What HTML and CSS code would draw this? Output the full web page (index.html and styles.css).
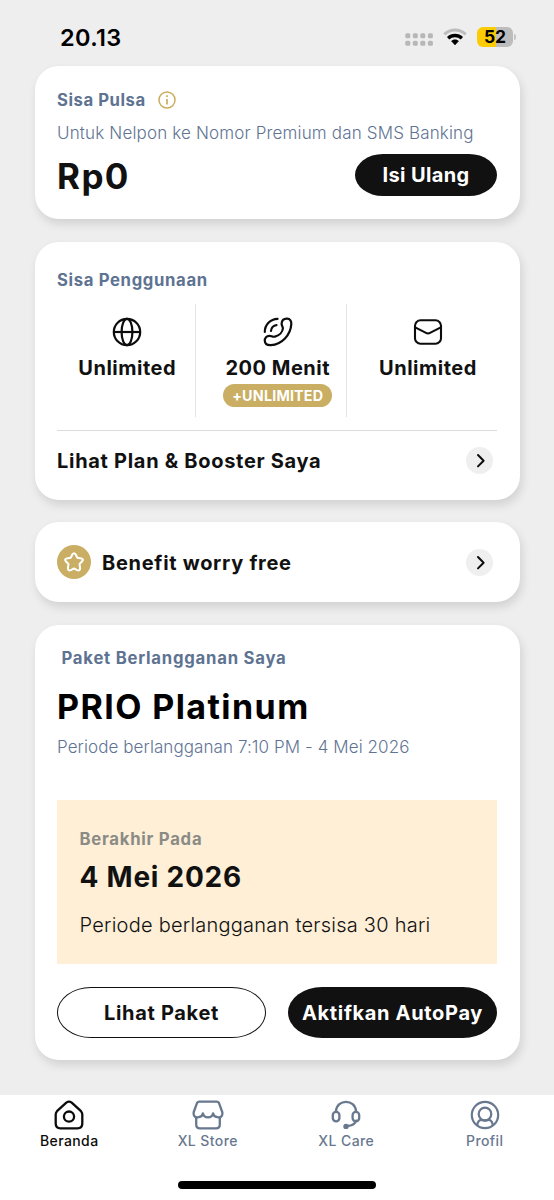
FILE: index.html
```html
<!DOCTYPE html>
<html lang="id">
<head>
<meta charset="utf-8">
<title>Beranda</title>
<link rel="stylesheet" href="styles.css">
</head>
<body>
<header class="status">
  <span class="status-time">20.13</span>
  <div class="status-icons">
    <svg class="dots" width="29" height="14" viewBox="0 0 29 14" fill="#b7b7b7">
      <rect x="0.3" y="0.2" width="5" height="5" rx="1.5"/><rect x="7.8" y="0.2" width="5" height="5" rx="1.5"/><rect x="15.3" y="0.2" width="5" height="5" rx="1.5"/><rect x="22.9" y="0.2" width="5" height="5" rx="1.5"/>
      <rect x="0.3" y="7.7" width="5" height="5" rx="1.5"/><rect x="7.8" y="7.7" width="5" height="5" rx="1.5"/><rect x="15.3" y="7.7" width="5" height="5" rx="1.5"/><rect x="22.9" y="7.7" width="5" height="5" rx="1.5"/>
    </svg>
    <svg class="wifi" width="24" height="18" viewBox="0 0 24 18" fill="none" stroke-width="3">
      <path d="M1.3 6.3C7.3.5 16.7.5 22.7 6.3" stroke="#bdbdbd"/>
      <path d="M5.1 10.2C9 6.6 15 6.6 18.9 10.2" stroke="#000" stroke-width="3.3"/>
      <path d="M8.5 13.1C10.4 11.4 13.6 11.4 15.5 13.1L12 16.9Z" fill="#000" stroke="#000" stroke-width=".6" stroke-linejoin="round"/>
    </svg>
    <div class="battery"><span class="battery-level">52</span><i class="battery-cap"></i></div>
  </div>
</header>

<main class="content">
  <section class="card balance">
    <div class="balance-head">
      <h2 class="label">Sisa Pulsa</h2>
      <svg width="18" height="18" viewBox="0 0 18 18" fill="none" stroke="#cbad5e" stroke-width="1.5"><circle cx="9" cy="9" r="8"/><path d="M9 8V13.6M9 4.3V6.1" stroke-width="1.7"/></svg>
    </div>
    <p class="note balance-note">Untuk Nelpon ke Nomor Premium dan SMS Banking</p>
    <div class="balance-row">
      <span class="amount">Rp0</span>
      <button class="btn btn-dark btn-small">Isi Ulang</button>
    </div>
  </section>

  <section class="card usage">
    <h2 class="label">Sisa Penggunaan</h2>
    <div class="quota">
      <div class="quota-item">
        <svg width="30" height="30" viewBox="0 0 30 30" fill="none" stroke="#0c0c0c" stroke-width="2.2"><circle cx="15" cy="15" r="13.2"/><ellipse cx="15" cy="15" rx="5.4" ry="13.2"/><path d="M1.7 15H28.3"/></svg>
        <span class="quota-value">Unlimited</span>
      </div>
      <div class="quota-item">
        <svg width="30" height="30" viewBox="0 0 30 30" fill="none" stroke="#0c0c0c" stroke-width="2.2" stroke-linecap="round" stroke-linejoin="round"><path d="M18.6 6.8C18.8 3.3 21.2 1.6 24.1 1.7C27.2 1.9 28.5 4.2 28.3 7.1C27.7 17.8 18.8 27.6 7.9 28.1C4.6 28.3 2 26.9 1.8 23.9C1.6 20.8 3.6 18.7 6.5 18.8C8.4 18.9 9.7 20.2 12 19.6C16.2 18.5 19.6 15.1 19.9 11.5C20 9.9 18.5 8.6 18.6 6.8Z"/><path d="M1.8 14.9C1.8 7.6 7.3 2 14.6 1.8M8 14C8.1 10.9 10.4 8.4 13.5 8.1"/></svg>
        <span class="quota-value">200 Menit</span>
        <span class="badge">+UNLIMITED</span>
      </div>
      <div class="quota-item">
        <svg width="30" height="30" viewBox="0 0 30 30" fill="none" stroke="#0c0c0c" stroke-width="2.1" stroke-linejoin="round"><rect x="2" y="3.3" width="26" height="23.4" rx="5.5"/><path d="M2.2 10.4L13 15.9Q15 17.1 17 15.9L27.8 10.4"/></svg>
        <span class="quota-value">Unlimited</span>
      </div>
    </div>
    <a class="link-row">
      <span class="row-title">Lihat Plan &amp; Booster Saya</span>
      <span class="chevron"><svg width="27" height="27" viewBox="0 0 27 27" fill="none" stroke="#0c0c0c" stroke-width="2" stroke-linecap="round" stroke-linejoin="round"><path d="M12 8L17.6 13.7L12 19.4"/></svg></span>
    </a>
  </section>

  <a class="card benefit">
    <span class="star"><svg width="34" height="34" viewBox="0 0 34 34" fill="none" stroke="#fff" stroke-width="2" stroke-linejoin="round"><path d="M15.4 9.3Q17 7 18.6 9.3L20.3 12.8L24.3 13.4Q27 14.2 25.2 16.3L22.5 19L23.1 23.2Q23 26.4 20.2 25.2L17 23.5L13.8 25.2Q11 26.4 10.9 23.2L11.5 19L8.8 16.3Q7 14.2 9.7 13.4L13.7 12.8Z"/></svg></span>
    <span class="row-title">Benefit worry free</span>
    <span class="chevron"><svg width="27" height="27" viewBox="0 0 27 27" fill="none" stroke="#0c0c0c" stroke-width="2" stroke-linecap="round" stroke-linejoin="round"><path d="M12 8L17.6 13.7L12 19.4"/></svg></span>
  </a>

  <section class="card plan">
    <h2 class="label plan-label">Paket Berlangganan Saya</h2>
    <h1 class="plan-name">PRIO Platinum</h1>
    <p class="note plan-period">Periode berlangganan 7:10 PM - 4 Mei 2026</p>
    <div class="expiry">
      <span class="expiry-label">Berakhir Pada</span>
      <strong class="expiry-date">4 Mei 2026</strong>
      <span class="expiry-left">Periode berlangganan tersisa 30 hari</span>
    </div>
    <div class="actions">
      <button class="btn btn-outline">Lihat Paket</button>
      <button class="btn btn-dark">Aktifkan AutoPay</button>
    </div>
  </section>
</main>

<footer class="bottom">
  <nav class="tabs">
    <a class="tab tab-active">
      <svg width="30" height="30" viewBox="0 0 30 30" fill="none" stroke="currentColor" stroke-width="2.3" stroke-linejoin="round"><path d="M12.3 2.6Q15 .8 17.7 2.6L27 11.2Q28.3 12.6 28.3 14.5V23.5Q28.3 28.3 23.5 28.3H6.5Q1.7 28.3 1.7 23.5V14.5Q1.7 12.6 3 11.2Z"/><circle cx="15" cy="16.6" r="5.1"/></svg>
      <span class="tab-name">Beranda</span>
    </a>
    <a class="tab">
      <svg width="32" height="30" viewBox="0 0 32 30" fill="none" stroke="currentColor" stroke-width="2.3" stroke-linejoin="round"><path d="M7.6 1.7H24.4Q26.6 1.7 27.3 3.8L30.4 12.5Q30.8 17.5 26.3 17.3Q21.8 17.2 21.1 13.3Q20.2 17.4 16 17.4Q11.8 17.4 10.9 13.3Q10.2 17.2 5.7 17.3Q1.2 17.5 1.6 12.5L4.7 3.8Q5.4 1.7 7.6 1.7Z"/><path d="M4.2 17V24.5Q4.2 28.3 8 28.3H24Q27.8 28.3 27.8 24.5V17"/></svg>
      <span class="tab-name">XL Store</span>
    </a>
    <a class="tab">
      <svg width="30" height="30" viewBox="0 0 30 30" fill="none" stroke="currentColor" stroke-width="2.3" stroke-linecap="round"><path d="M4.9 11.5C6-1.4 24-1.4 25.1 11.5M25.2 20.6C23.8 24.2 20.6 25.8 16.5 26"/><rect x="1.8" y="11.8" width="6.6" height="9.6" rx="3.3"/><rect x="21.6" y="11.8" width="6.6" height="9.6" rx="3.3"/><circle cx="15" cy="26.4" r="2" fill="currentColor" stroke-width="1.4"/></svg>
      <span class="tab-name">XL Care</span>
    </a>
    <a class="tab">
      <svg width="30" height="30" viewBox="0 0 30 30" fill="none" stroke="currentColor" stroke-width="2.2"><circle cx="15" cy="15" r="13.2"/><circle cx="15" cy="14" r="6.3"/><path d="M7.2 25.6Q7.5 20.5 11 19.8Q15 21.6 19 19.8Q22.5 20.5 22.8 25.6"/></svg>
      <span class="tab-name">Profil</span>
    </a>
  </nav>
  <div class="home-bar"></div>
</footer>
</body>
</html>
```
FILE: styles.css
```css
* { box-sizing: border-box; margin: 0; padding: 0; }
body {
  width: 554px;
  height: 1200px;
  display: flex;
  flex-direction: column;
  overflow: hidden;
  background: #eee;
  color: #111;
  font-family: Inter, "Liberation Sans", sans-serif;
  white-space: nowrap;
}
svg { display: block; flex: none; }

.status {
  height: 66px;
  padding: 8px 41px 0 60px;
  display: flex;
  justify-content: space-between;
  align-items: center;
}
.status-time { color: #000; font-size: 23.5px; font-weight: 600; letter-spacing: .35px; }
.status-icons { display: flex; align-items: center; height: 20px; }
.dots { margin-top: 6px; }
.wifi { margin-left: 9px; }
.battery {
  position: relative;
  width: 36px;
  height: 20px;
  margin-left: 10px;
  border-radius: 6px;
  background: linear-gradient(90deg, #fbcb05 53%, #bcbcbc 53%);
}
.battery-level {
  display: block;
  color: #000;
  font-size: 17.5px;
  font-weight: 700;
  line-height: 20px;
  text-align: center;
}
.battery-cap {
  position: absolute;
  top: 7px;
  right: -3px;
  width: 2px;
  height: 6px;
  border-radius: 0 3px 3px 0;
  background: #c4c4c4;
}

.content { display: flex; flex-direction: column; gap: 22.5px; padding: 0 34.5px; }
.card {
  border-radius: 24px;
  background: #fff;
  box-shadow: 2px 5px 10px rgba(0, 0, 0, .12);
  padding: 0 22.5px;
}
.label { color: #5e7392; font-size: 16.7px; font-weight: 650; letter-spacing: .7px; }
.note { color: #5f7494; font-size: 17px; font-weight: 320; }
.row-title { font-size: 20px; font-weight: 700; line-height: 24px; letter-spacing: .7px; padding-top: 1px; }

.balance { height: 153px; padding-top: 17px; }
.balance-head { display: flex; align-items: center; gap: 12px; height: 34px; }
.balance-head .label { letter-spacing: .55px; }
.balance-note { line-height: 33px; letter-spacing: .16px; }
.balance-row { display: flex; justify-content: space-between; height: 42px; margin-top: 3.5px; }
.amount { font-size: 35px; font-weight: 700; line-height: 44px; letter-spacing: 1.4px; }

.usage { height: 258px; padding-top: 22px; }
.usage .label { line-height: 32px; letter-spacing: .65px; }
.quota { display: grid; grid-template-columns: 139px 151px 150px; height: 113px; margin-top: 8px; }
.quota-item {
  display: flex;
  flex-direction: column;
  align-items: center;
  padding-top: 13px;
}
.quota-item:not(:last-child) { border-right: 1px solid #e3e3e3; }
.quota-item:nth-child(2) { padding-left: 13.5px; }
.quota-item:last-child { padding-left: 12px; }
.quota-item:nth-child(1) { padding-left: 2.5px; }
.quota-item svg { margin-bottom: 6px; }
.quota-value { font-size: 20px; font-weight: 700; line-height: 30px; letter-spacing: .5px; }
.badge {
  width: 109px;
  height: 23px;
  margin-top: 1px;
  border-radius: 12px;
  background: #c9ae63;
  color: #fff;
  font-size: 14.3px;
  font-weight: 650;
  line-height: 24px;
  letter-spacing: .2px;
  text-align: center;
}
.link-row {
  display: flex;
  align-items: center;
  justify-content: space-between;
  height: 60px;
  margin-top: 13px;
  padding-right: 4px;
  border-top: 1px solid #dcdcdc;
}
.chevron { flex: none; border-radius: 50%; background: #efefef; }

.benefit { display: flex; align-items: center; height: 80px; padding-right: 26.5px; }
.star { margin-right: 11px; border-radius: 50%; background: #c9ae63; }
.benefit .chevron { margin-left: auto; }

.plan { height: 435px; padding-top: 17px; }
.plan-label { padding-left: 4.5px; line-height: 33px; letter-spacing: .77px; }
.plan-name { color: #000; font-size: 34px; font-weight: 700; line-height: 63px; letter-spacing: 1.42px; }
.plan-period { line-height: 18px; letter-spacing: .08px; }
.expiry {
  display: flex;
  flex-direction: column;
  height: 164px;
  margin-top: 44px;
  padding: 26px 22.5px 0;
  background: #feefd6;
}
.expiry-label { color: #8b8b86; font-size: 16.7px; font-weight: 650; line-height: 27px; letter-spacing: .75px; }
.expiry-date { font-size: 28px; font-weight: 700; line-height: 49px; letter-spacing: .75px; }
.expiry-left { font-size: 20px; font-weight: 320; line-height: 46px; letter-spacing: .24px; }
.actions { display: grid; grid-template-columns: 1fr 1fr; gap: 22px; margin-top: 23px; }
.btn {
  height: 51px;
  padding-top: 1px;
  border: 0;
  border-radius: 34px / 50%;
  font: 700 20px Inter, "Liberation Sans", sans-serif;
  letter-spacing: .67px;
}
.btn-dark { background: #111; color: #fff; }
.btn-outline { border: 1.5px solid #111; background: #fff; color: #111; }
.btn-small { width: 142px; height: 42px; padding-top: 0; border-radius: 28px / 50%; letter-spacing: .35px; }

.bottom {
  display: flex;
  flex-direction: column;
  align-items: center;
  height: 105.5px;
  margin-top: auto;
  background: #fff;
}
.tabs { display: grid; grid-template-columns: repeat(4, 1fr); width: 100%; padding-top: 5.5px; }
.tab { display: flex; flex-direction: column; align-items: center; color: #68788f; }
.tab-active { color: #0c0c0c; }
.tab-name { font-size: 14px; font-weight: 500; line-height: 22px; letter-spacing: .4px; }
.home-bar { width: 198px; height: 7.5px; margin-top: 29px; border-radius: 4px; background: #000; }
```
